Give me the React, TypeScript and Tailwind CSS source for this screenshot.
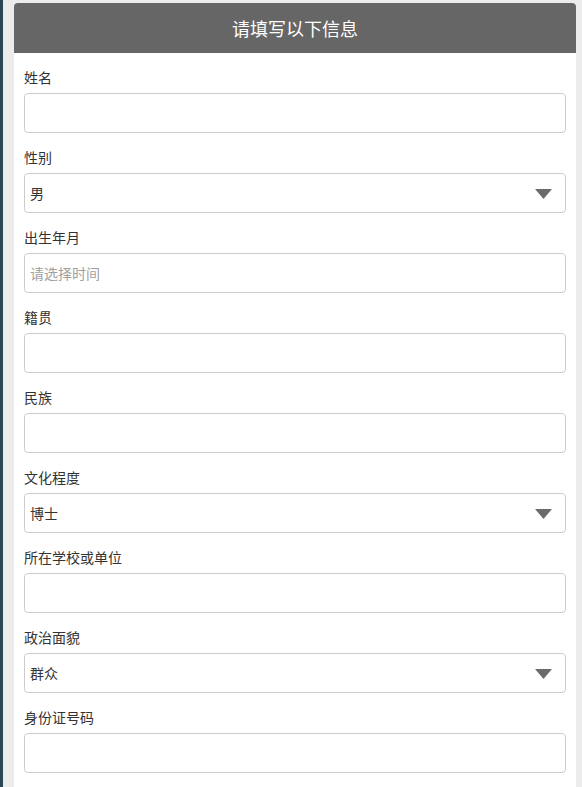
import React from "react";

type Field = { label: string; kind: "input" | "select" | "placeholder"; value?: string };

const fields: Field[] = [
  { label: "姓名", kind: "input" },
  { label: "性别", kind: "select", value: "男" },
  { label: "出生年月", kind: "placeholder", value: "请选择时间" },
  { label: "籍贯", kind: "input" },
  { label: "民族", kind: "input" },
  { label: "文化程度", kind: "select", value: "博士" },
  { label: "所在学校或单位", kind: "input" },
  { label: "政治面貌", kind: "select", value: "群众" },
  { label: "身份证号码", kind: "input" },
];

export default function App() {
  return (
    <div
      className="flex h-[787px] w-[582px] overflow-hidden bg-[#ececec]"
      style={{ fontFamily: '"Noto Sans CJK SC", "Noto Sans", sans-serif' }}
    >
      <div className="w-[3px] shrink-0 bg-[#2e4756]" />
      <div className="ml-[11px] mt-[3px] w-[562px] shrink-0 rounded-t-[4px] bg-white">
        <div className="flex h-[50px] items-center justify-center rounded-t-[4px] bg-[#666666] text-[18px] text-white">
          请填写以下信息
        </div>
        <div className="flex flex-col gap-4 px-[10px] pt-4">
          {fields.map((f) => (
            <div key={f.label} className="flex flex-col gap-1">
              <div className="h-5 text-[14px] leading-[17px] text-[#333]">{f.label}</div>
              <div className="relative flex h-10 items-center rounded-[4px] border border-[#cccccc] bg-white pl-[5px] text-[14px]">
                {f.kind === "select" && (
                  <>
                    <span className="text-[#333]">{f.value}</span>
                    <svg
                      className="absolute right-[13px] top-[15px]"
                      width="17"
                      height="10"
                      viewBox="0 0 17 10"
                    >
                      <polygon points="0,0 17,0 8.5,10" fill="#6b6b6b" />
                    </svg>
                  </>
                )}
                {f.kind === "placeholder" && <span className="text-[#a0a0a0]">{f.value}</span>}
              </div>
            </div>
          ))}
        </div>
      </div>
    </div>
  );
}
